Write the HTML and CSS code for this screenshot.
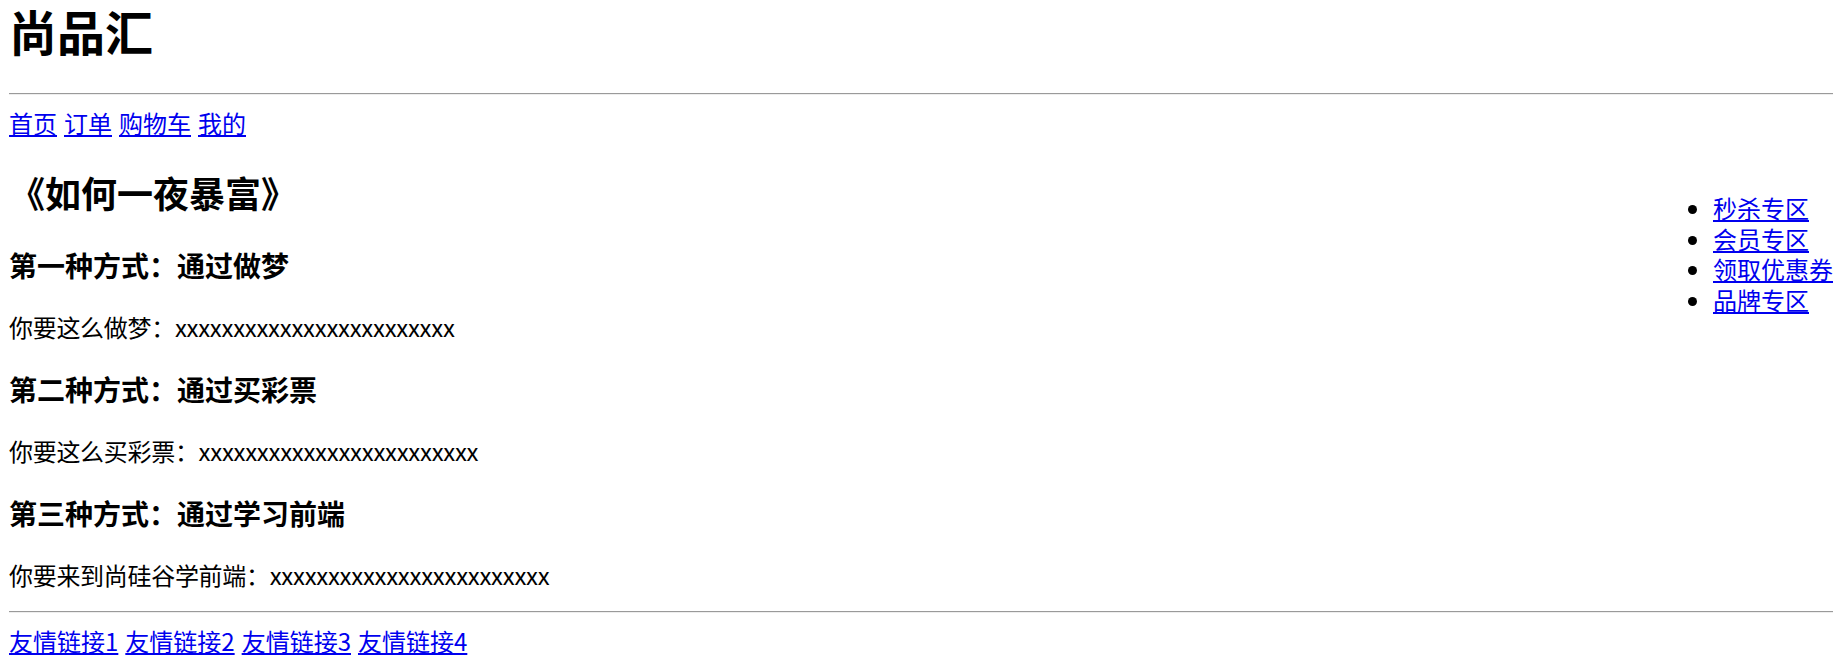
FILE: index.html
```html
<!DOCTYPE html>
<html lang="zh-CN">
<head>
    <meta charset="UTF-8">
    <meta name="viewport" content="width=device-width, initial-scale=1.0">
    <title>尚品汇</title>
    <link rel="stylesheet" href="styles.css">
</head>
<body>

    <h1 class="logo">尚品汇</h1>
    <hr class="rule">

    <nav class="links">
        <a href="#">首页</a>
        <a href="#">订单</a>
        <a href="#">购物车</a>
        <a href="#">我的</a>
    </nav>

    <div class="content">
        <main class="article">
            <h2>《如何一夜暴富》</h2>

            <h3>第一种方式：通过做梦</h3>
            <p>你要这么做梦：xxxxxxxxxxxxxxxxxxxxxxxx</p>

            <h3>第二种方式：通过买彩票</h3>
            <p>你要这么买彩票：xxxxxxxxxxxxxxxxxxxxxxxx</p>

            <h3>第三种方式：通过学习前端</h3>
            <p>你要来到尚硅谷学前端：xxxxxxxxxxxxxxxxxxxxxxxx</p>
        </main>

        <ul class="side">
            <li><a href="#">秒杀专区</a></li>
            <li><a href="#">会员专区</a></li>
            <li><a href="#">领取优惠券</a></li>
            <li><a href="#">品牌专区</a></li>
        </ul>
    </div>

    <hr class="rule rule-foot">

    <footer class="links links-foot">
        <a href="#">友情链接1</a>
        <a href="#">友情链接2</a>
        <a href="#">友情链接3</a>
        <a href="#">友情链接4</a>
    </footer>

</body>
</html>
```

FILE: styles.css
```css
body {
    margin: 0;
    padding: 0 0 0 9px;
    font-family: "Noto Sans CJK SC", "Liberation Sans", sans-serif;
    font-size: 24px;
    color: #000;
    background-color: #fff;
}
a {
    color: #0000ee;
    text-decoration: underline;
}
.logo {
    margin: 0;
    font-size: 48px;
    line-height: 60px;
}
.rule {
    margin: 33px 0 0;
    height: 0;
    border: none;
    border-top: 1px solid #9a9a9a;
    border-bottom: 1px solid #eeeeee;
}
.links {
    display: flex;
    gap: 7px;
    margin-top: 12px;
    line-height: 32px;
}
.content {
    display: flex;
    align-items: flex-start;
}
.article {
    flex: 1;
}
.article h2 {
    margin: 30px 0 32px;
    font-size: 36px;
    line-height: 46px;
}
.article h3 {
    margin: 29px 0 28px;
    font-size: 28px;
    line-height: 36px;
}
.article h2 + h3 {
    margin-top: 0;
}
.article p {
    margin: 0;
    line-height: 31px;
    letter-spacing: -0.3px;
}
.side {
    flex: none;
    margin: 54px 0 0;
    padding-left: 36px;
    line-height: 30.7px;
}
.rule-foot {
    margin-top: 21px;
}
.links-foot {
    margin-top: 12px;
}
```
